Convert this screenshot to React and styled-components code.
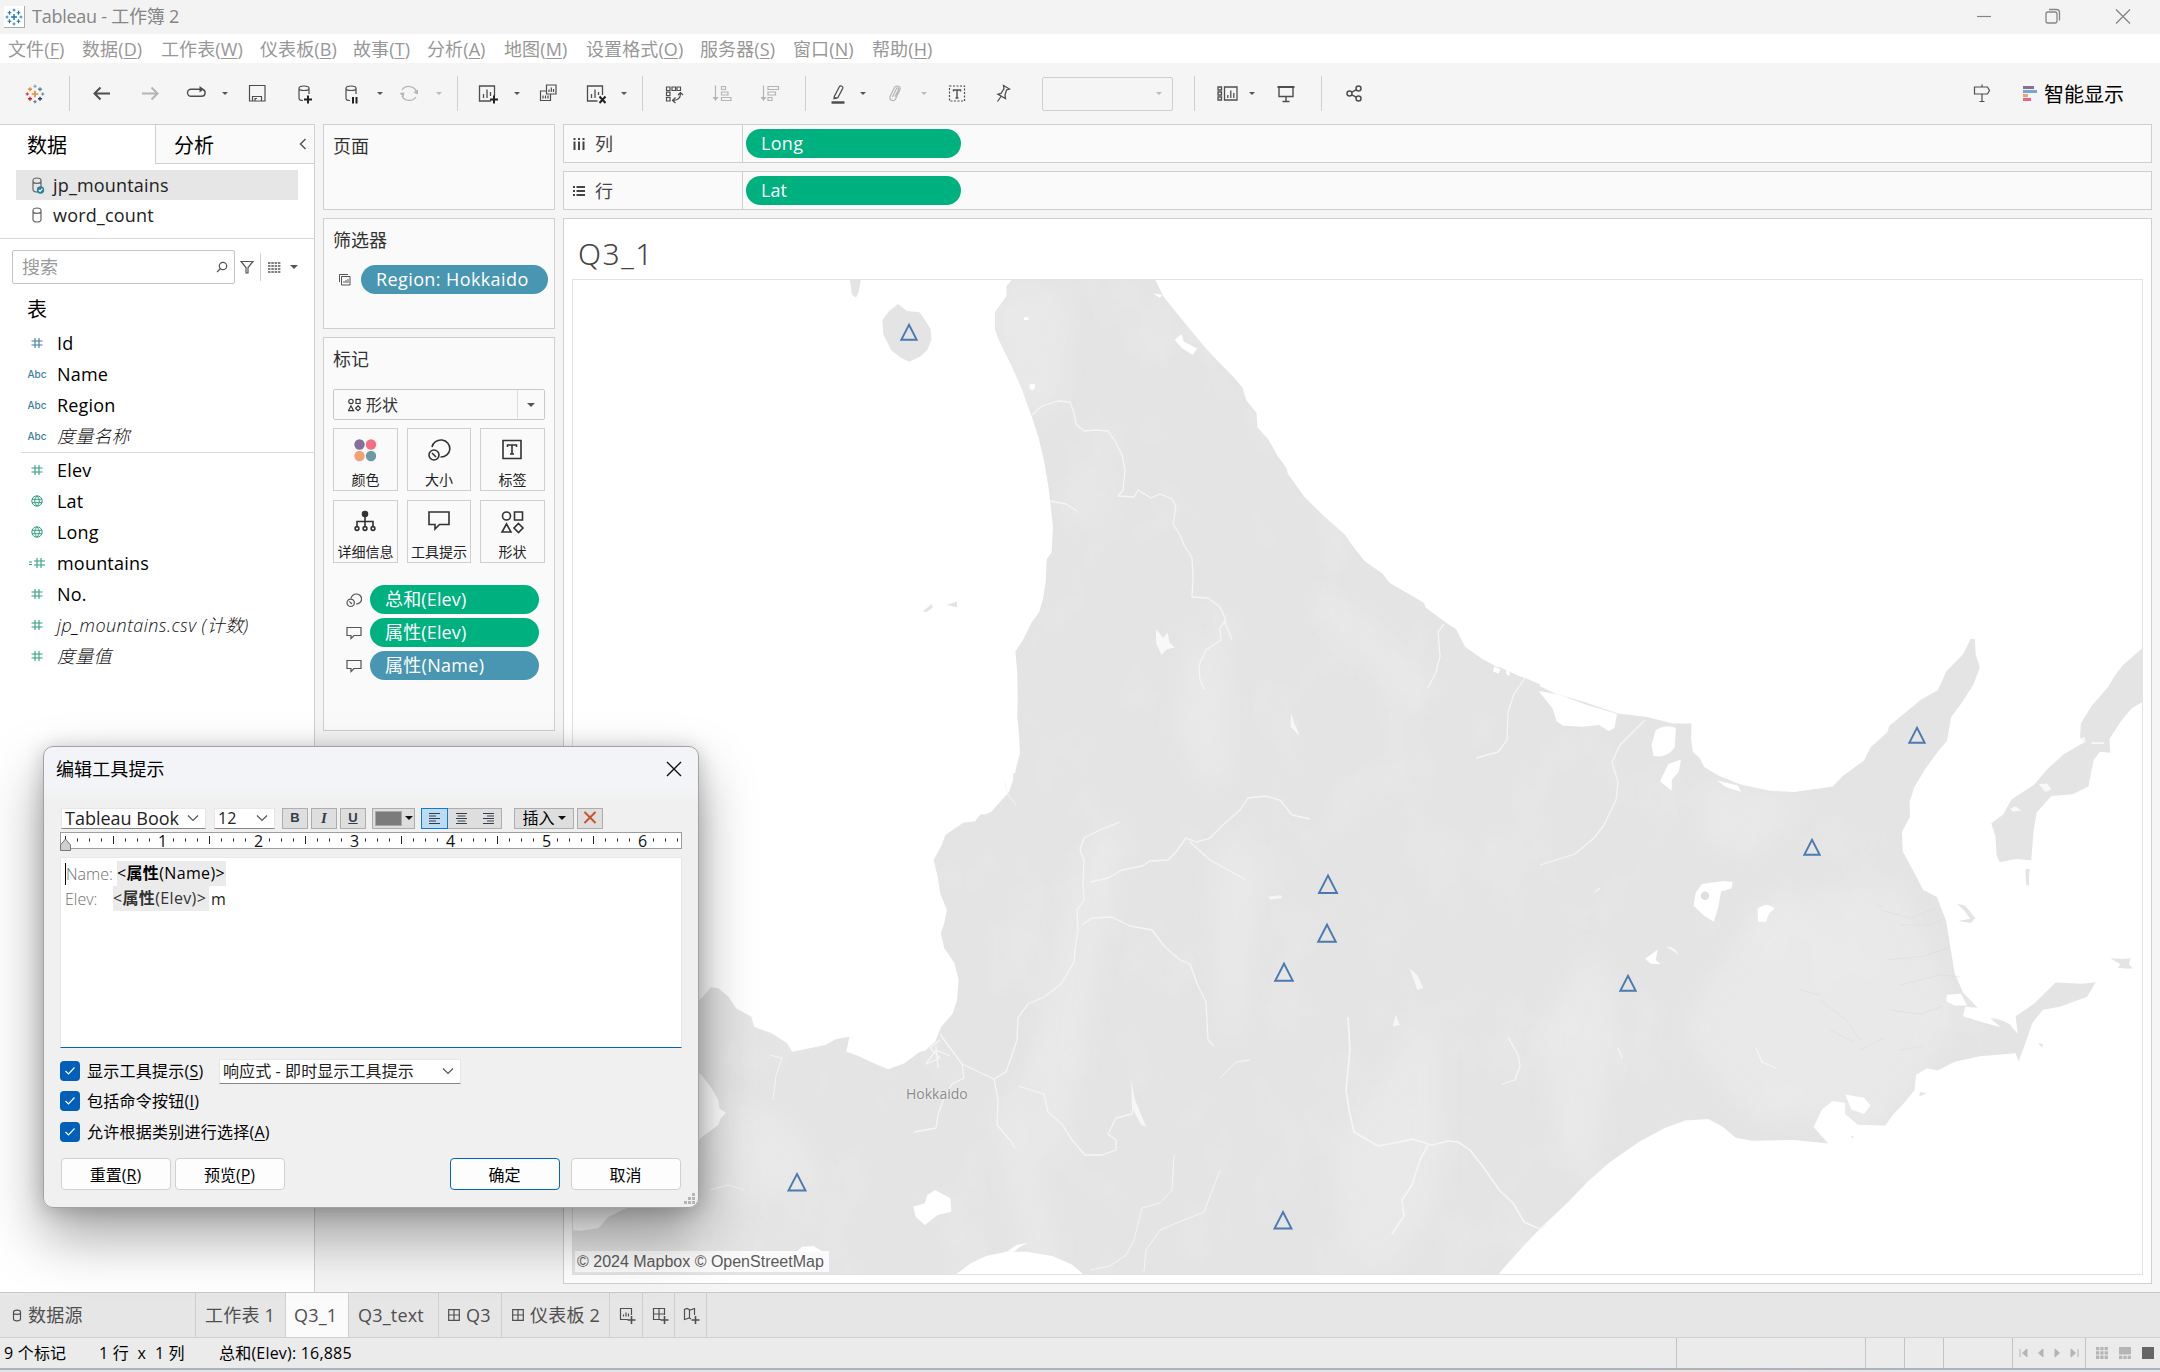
import React from "react";
import styled, { createGlobalStyle, css } from "styled-components";

const Global = createGlobalStyle`
  *, *::before, *::after { box-sizing: border-box; }
  html, body { margin: 0; padding: 0; background: #f5f5f5; }
  body { font-family: "Open Sans", "Noto Sans CJK SC", sans-serif; font-size: 18px; line-height: 1; color: #000; overflow: hidden; }
  svg { display: block; flex: none; }
  u { text-underline-offset: 2px; text-decoration-thickness: 1px; }
`;

const line = "#cfcfcf";

/* ---------- frame ---------- */
const Window = styled.div`
  position: relative;
  width: 2160px;
  height: 1372px;
  display: flex;
  flex-direction: column;
  overflow: hidden;
  background: #f5f5f5;
`;
const TitleBar = styled.header`
  height: 34px;
  flex: none;
  background: #f3f3f3;
  display: flex;
  align-items: center;
  padding: 0 27px 0 4px;
  color: #858585;
`;
const AppBadge = styled.span`
  width: 21px;
  height: 22px;
  background: #fff;
  border-right: 1px solid #aaa;
  border-bottom: 1px solid #aaa;
  display: grid;
  place-items: center;
`;
const WindowTitle = styled.span`
  margin-left: 7px;
  line-height: 22px;
  padding-bottom: 2px;
  white-space: nowrap;
  letter-spacing: -0.25px;
`;
const WindowControls = styled.div`
  margin-left: auto;
  display: flex;
  gap: 50px;
`;
const MenuBar = styled.nav`
  height: 29px;
  flex: none;
  background: #fff;
  display: flex;
  align-items: center;
  padding-left: 8px;
  gap: 17px;
  color: #979797;
`;
const MenuItem = styled.span`
  width: ${(p) => p.$w}px;
  line-height: 30px;
  padding-top: 1px;
  white-space: nowrap;
  letter-spacing: 0.1px;
`;
const Toolbar = styled.div`
  height: 61px;
  flex: none;
  display: flex;
  align-items: center;
  padding-right: 35px;
`;
const Tool = styled.span`
  width: 28px;
  height: 28px;
  margin-left: ${(p) => p.$ml}px;
  color: ${(p) => (p.$dim ? "#b4b4b4" : "#4e4e4e")};
  flex: none;
  display: grid;
  align-items: center;
`;
const Caret = styled.span`
  width: 8px;
  flex: none;
  display: flex;
  justify-content: center;
  margin-left: ${(p) => p.$ml || 0}px;
  &::before {
    content: "";
    border: solid transparent;
    border-width: ${(p) => p.$s || 3.5}px ${(p) => p.$s || 3}px 0;
    border-top-color: ${(p) => (p.$dim ? "#bbb" : p.$black ? "#111" : "#555")};
  }
`;
const ToolDivider = styled.span`
  width: 1px;
  height: 35px;
  background: ${line};
  margin-left: ${(p) => p.$ml}px;
  flex: none;
`;
const FitBox = styled.span`
  width: 131px;
  height: 34px;
  border: 1px solid ${line};
  border-radius: 2px;
  margin-left: 25px;
  display: flex;
  align-items: center;
  justify-content: flex-end;
  padding-right: 9px;
`;
const ShowMe = styled.span`
  margin-left: 26px;
  display: flex;
  align-items: center;
  gap: 6px;
  font-size: 20px;
  line-height: 28px;
  padding-top: 2px;
`;

const Body = styled.main`
  height: 1168px;
  flex: none;
  display: flex;
`;

/* ---------- data pane ---------- */
const DataPane = styled.aside`
  width: 315px;
  flex: none;
  background: #fff;
  border-top: 1px solid ${line};
  border-right: 1px solid ${line};
`;
const PaneTabs = styled.div`
  display: flex;
  height: 39px;
  font-size: 20px;
`;
const PaneTab = styled.div`
  display: flex;
  align-items: center;
  width: ${(p) => (p.$active ? 155 : 159)}px;
  padding-top: 3px;
  padding-left: ${(p) => (p.$active ? 27 : 18)}px;
  line-height: 30px;
  ${(p) =>
    !p.$active &&
    css`
      background: #fafafa;
      border-left: 1px solid ${line};
      border-bottom: 1px solid ${line};
      padding-right: 7px;
      justify-content: space-between;
    `}
`;
const Sources = styled.div`
  padding: 6px 16px 7px;
  border-bottom: 1px solid #d9d9d9;
  height: 75px;
`;
const Source = styled.div`
  height: 30px;
  display: flex;
  align-items: center;
  padding-left: 15px;
  padding-bottom: 1px;
  gap: 8px;
  line-height: 28px;
  color: #222;
  letter-spacing: 0.18px;
  background: ${(p) => (p.$active ? "#e6e6e6" : "transparent")};
`;
const SearchRow = styled.div`
  display: flex;
  align-items: center;
  height: 34px;
  margin: 11px 0 0 12px;
`;
const SearchBox = styled.div`
  width: 223px;
  height: 34px;
  border: 1px solid #c4c4c4;
  border-radius: 2px;
  display: flex;
  align-items: center;
  justify-content: space-between;
  padding: 0 6px 0 9px;
  color: #9a9a9a;
  line-height: 28px;
`;
const SearchDivider = styled.span`
  width: 1px;
  height: 28px;
  background: ${line};
  margin: 0 7px 0 1px;
`;
const TablesHead = styled.div`
  font-size: 20px;
  line-height: 30px;
  padding: 11px 0 0 27px;
  height: 43px;
`;
const FieldGroup = styled.div`
  margin-left: 21px;
  padding-top: ${(p) => (p.$last ? 1 : 0)}px;
  padding-bottom: ${(p) => (p.$last ? 0 : 1)}px;
  border-bottom: ${(p) => (p.$last ? 0 : 1)}px solid #d9d9d9;
`;
const Field = styled.div`
  height: 31.1px;
  display: flex;
  align-items: center;
  line-height: 28px;
  letter-spacing: 0.2px;
  white-space: nowrap;
  ${(p) =>
    p.$it &&
    css`
      font-style: italic;
      color: #111;
      font-weight: 300;
      letter-spacing: ${p.$ls}px;
    `}
`;
const FieldIcon = styled.span`
  width: 32px;
  margin-right: 4px;
  display: flex;
  justify-content: center;
  color: ${(p) => (p.$dim ? "#3c7f9e" : "#2fa27b")};
  font: 500 10px/12px Inter, sans-serif;
  letter-spacing: 0;
`;

/* ---------- cards ---------- */
const Cards = styled.section`
  width: 248px;
  flex: none;
  padding: 0 0 0 8px;
  display: flex;
  flex-direction: column;
  gap: 8px;
`;
const Card = styled.div`
  width: 232px;
  height: ${(p) => p.$h}px;
  background: #fafafa;
  border: 1px solid ${line};
  padding: 8px 9px 0;
  color: #333;
`;
const CardTitle = styled.div`
  line-height: 27px;
  height: 28px;
`;
const PillRow = styled.div`
  display: flex;
  align-items: center;
  height: 29px;
  margin-top: ${(p) => p.$mt || 4}px;
  padding-left: ${(p) => p.$pl}px;
  gap: ${(p) => p.$gap}px;
  color: #555;
`;
const Pill = styled.span`
  width: ${(p) => p.$w}px;
  flex: none;
  height: 29px;
  border-radius: 15px;
  background: ${(p) => (p.$blue ? "#4996b2" : "#00b180")};
  color: #fff;
  padding-left: 15px;
  line-height: 28px;
  white-space: nowrap;
  letter-spacing: ${(p) => p.$ls || 0}px;
`;
const MarkSelect = styled.div`
  height: 31px;
  width: 212px;
  margin-top: 15px;
  border: 1px solid #c8c8c8;
  border-radius: 2px;
  display: flex;
  align-items: center;
  font-size: 16px;
  line-height: 28px;
  padding-left: 14px;
  gap: 5px;
`;
const MarkSelectArrow = styled.span`
  margin-left: auto;
  height: 29px;
  width: 27px;
  border-left: 1px solid #dedede;
  display: grid;
  place-items: center;
`;
const MarkGrid = styled.div`
  display: grid;
  grid-template-columns: 65px 64px 65px;
  gap: 9px;
  margin: 8px 0 22px;
`;
const MarkButton = styled.div`
  height: 63px;
  border: 1px solid ${line};
  display: flex;
  flex-direction: column;
  align-items: center;
  padding-top: 7px;
  font-size: 14px;
  line-height: 21px;
  gap: 5px;
  color: #222;
  white-space: nowrap;
`;

/* ---------- view ---------- */
const View = styled.section`
  width: 1589px;
  flex: none;
`;
const Shelf = styled.div`
  height: 39px;
  margin-bottom: 8px;
  background: #fafafa;
  border: 1px solid ${line};
  display: flex;
  align-items: center;
`;
const ShelfLabel = styled.div`
  width: 179px;
  height: 37px;
  border-right: 1px solid ${line};
  margin-right: 3px;
  padding-left: 8px;
  display: flex;
  align-items: center;
  gap: 9px;
  color: #444;
  line-height: 28px;
`;
const Sheet = styled.div`
  height: 1066px;
  background: #fff;
  border: 1px solid ${line};
  padding: 14px 8px 0;
`;
const SheetTitle = styled.h1`
  margin: 0;
  padding-left: 6px;
  height: 46px;
  font: 300 30px/42px "Noto Sans", sans-serif;
  color: #444;
  letter-spacing: 1.5px;
`;
const MapFrame = styled.div`
  position: relative;
  width: 1571px;
  height: 996px;
  border: 1px solid #e2e2e2;
`;
const PlaceLabel = styled.span`
  position: absolute;
  left: 333px;
  top: 804px;
  font-size: 14px;
  line-height: 20px;
  color: #8a8a8a;
  text-shadow: 0 0 2px #fff;
`;
const Attribution = styled.span`
  position: absolute;
  left: 2px;
  bottom: 2px;
  height: 21px;
  width: 254px;
  padding-left: 2px;
  background: rgba(255, 255, 255, 0.8);
  font: 16px/21px "Liberation Sans", sans-serif;
  color: #5a5a5a;
  white-space: nowrap;
`;

/* ---------- bottom ---------- */
const SheetTabs = styled.div`
  height: 45px;
  flex: none;
  background: #e6e6e6;
  border-top: 1px solid #c8c8c8;
  display: flex;
  color: #4f4f4f;
`;
const SheetTab = styled.div`
  width: ${(p) => p.$w}px;
  padding-left: ${(p) => p.$pl}px;
  border-right: 1px solid ${line};
  background: ${(p) => (p.$active ? "#fbfbfb" : "transparent")};
  display: flex;
  align-items: center;
  gap: 6px;
  line-height: 44px;
  white-space: nowrap;
  letter-spacing: 0.2px;
`;
const StatusBar = styled.footer`
  height: 31px;
  flex: none;
  background: #ebebeb;
  border-top: 1px solid ${line};
  display: flex;
  font-size: 16px;
  line-height: 30px;
  padding-left: 4px;
  white-space: nowrap;
`;
const Status = styled.span`
  width: ${(p) => p.$w}px;
  flex: none;
  letter-spacing: 0.2px;
`;
const StatusCell = styled.div`
  width: ${(p) => p.$w}px;
  flex: none;
  border-left: 1px solid #c4c4c4;
  display: flex;
  align-items: center;
  justify-content: space-evenly;
`;
const ViewModes = styled(StatusCell)`
  justify-content: flex-start;
  padding-left: 10px;
  gap: 11px;
`;
const DesktopEdge = styled.div`
  height: 4px;
  border-top: 2px solid #abb4ba;
  background: linear-gradient(90deg, #dfe3ea 0 75%, #f1dede 78%, #dfe6f0 90%);
`;

/* ---------- dialog ---------- */
const Dialog = styled.div`
  position: absolute;
  left: 43px;
  top: 746px;
  width: 656px;
  height: 462px;
  border: 1px solid #a2a2a2;
  border-radius: 10px;
  background: linear-gradient(#f3f4f7 0 40px, #f0f0f0 54px);
  box-shadow: 0 28px 56px rgba(0, 0, 0, 0.36), 0 2px 20px rgba(0, 0, 0, 0.2);
  padding: 0 16px;
  font-size: 16px;
`;
const DialogTitle = styled.div`
  height: 60px;
  padding: 0 0 17px;
  margin-left: -4px;
  margin-right: -1px;
  font-size: 18px;
  line-height: 28px;
  letter-spacing: 0.1px;
  display: flex;
  align-items: center;
  justify-content: space-between;
`;
const FormatRow = styled.div`
  height: 22px;
  display: flex;
  align-items: center;
`;
const Combo = styled.span`
  width: ${(p) => p.$w}px;
  flex: none;
  height: ${(p) => p.$h}px;
  margin: 0 ${(p) => p.$mr || 0}px 0 ${(p) => p.$ml || 0}px;
  padding: 0 6px 0 3px;
  background: #fff;
  border: 1px solid #e6e6e6;
  border-bottom-color: #868686;
  display: flex;
  align-items: center;
  justify-content: space-between;
  font-size: ${(p) => p.$fs || 16}px;
  line-height: 20px;
  white-space: nowrap;
  color: #222;
`;
const FormatButton = styled.span`
  width: ${(p) => p.$w || 26}px;
  height: 21px;
  margin-left: ${(p) => (p.$ml === undefined ? 3 : p.$ml)}px;
  border: 1px solid ${(p) => (p.$on ? "#0f7ad1" : "#adadad")};
  ${(p) => p.$mid && "border-left-width: 0; border-right-width: 0;"}
  ${(p) => p.$end && "border-left-width: 0;"}
  background: ${(p) => (p.$on ? "#bcdcf4" : "#dedede")};
  display: flex;
  align-items: center;
  justify-content: center;
  gap: 3px;
  font-size: 16px;
  line-height: 20px;
`;
const Glyph = styled.span`
  font: 700 13px/18px "Liberation Sans", sans-serif;
  color: #333e4c;
  ${(p) => p.$italic && 'font-style: italic; font-family: "Liberation Serif", serif; font-size: 15px;'}
  ${(p) => p.$under && "text-decoration: underline;"}
`;
const Swatch = styled.span`
  width: 27px;
  height: 15px;
  background: #7b7b7b;
  border: 1px solid #a8a8a8;
`;
const RulerRow = styled.div`
  display: flex;
  width: 622px;
  height: 25px;
  margin-top: 3px;
`;
const Editor = styled.div`
  height: 191px;
  background: #fff;
  border: 1px solid #e6e6e6;
  border-top-color: #e9e9e9;
  border-bottom: 1px solid #0067b8;
  padding: 3px 0 0 4px;
  font-size: 16px;
  color: #222;
`;
const EditorLine = styled.div`
  height: 25px;
  display: flex;
  align-items: center;
  line-height: 24px;
  white-space: nowrap;
`;
const Cursor = styled.span`
  width: 1px;
  height: 22px;
  background: #000;
`;
const Faint = styled.span`
  color: #707070;
  font-weight: 300;
  width: ${(p) => p.$w}px;
`;
const Token = styled.span`
  background: #ebebeb;
  height: 25px;
  width: ${(p) => p.$w}px;
  color: ${(p) => (p.$dark ? "#000" : "#333")};
  letter-spacing: 0.35px;
  margin-right: 2px;
`;
const Options = styled.div`
  padding-top: 10px;
  letter-spacing: 0.1px;
`;
const OptionRow = styled.div`
  height: ${(p) => p.$h}px;
  display: flex;
  align-items: center;
  line-height: 24px;
  white-space: nowrap;
`;
const OptionLabel = styled.span`
  width: ${(p) => (p.$w ? p.$w + "px" : "auto")};
  letter-spacing: 0.25px;
`;
const CheckMark = styled.span`
  width: 20px;
  height: 20px;
  border-radius: 4px;
  background: #005fb8;
  margin-right: 7px;
  display: grid;
  place-items: center;
`;
const ButtonRow = styled.div`
  display: flex;
  margin-top: 12px;
`;
const DialogButton = styled.button`
  width: 110px;
  height: 32px;
  flex: none;
  margin: 0;
  padding: 1px 1px 0 0;
  margin-left: ${(p) => p.$ml}px;
  font: 16px/28px "Open Sans", "Noto Sans CJK SC", sans-serif;
  background: #fdfdfd;
  border: 1px solid ${(p) => (p.$primary ? "#0067c0" : "#d0d0d0")};
  border-radius: 4px;
  color: #000;
`;
const Grip = styled.span`
  position: absolute;
  right: 2px;
  bottom: 2px;
`;

/* ---------- icons ---------- */
const Svg = ({ s = 28, w = s, h = s, vb, sw = 1.5, children }) => (
  <svg width={w} height={h} viewBox={vb || `0 0 ${w} ${h}`} fill="none" stroke="currentColor" strokeWidth={sw}>
    {children}
  </svg>
);
const plus = (x, y, r) => `M${x - r} ${y}h${2 * r}M${x} ${y - r}v${2 * r}`;
const Logo = ({ size, mono }) => {
  const c = mono ? Array(9).fill("#1f77b4") : ["#eb8a2f", "#5b879b", "#5b879b", "#eb8a2f", "#c72037", "#c72037", "#1f447e", "#7199a6", "#59657f"];
  return (
    <svg width={size} height={size} viewBox="0 0 22 22" strokeWidth="1.5" fill="none">
      <path d={plus(11, 11, 3.6)} stroke={c[3]} strokeWidth="1.8" />
      <path d={plus(5.5, 5.8, 2.3)} stroke={c[0]} />
      <path d={plus(16.5, 5.8, 2.3)} stroke={c[2]} />
      <path d={plus(5.5, 16.2, 2.3)} stroke={c[4]} />
      <path d={plus(16.5, 16.2, 2.3)} stroke={c[6]} />
      <path d={plus(11, 2.5, 1.8)} stroke={c[7]} strokeWidth="1.1" />
      <path d={plus(11, 19.5, 1.8)} stroke={c[8]} strokeWidth="1.1" />
      <path d={plus(2.5, 11, 1.8)} stroke={c[5]} strokeWidth="1.1" />
      <path d={plus(19.5, 11, 1.8)} stroke={c[1]} strokeWidth="1.1" />
    </svg>
  );
};
const icons = {
  back: <Svg sw={2}><path d="M6.500 13.500H22M12.500 7.500l-6 6 6 6" /></Svg>,
  fwd: <Svg sw={2}><path d="M6 13.500h15.500M15.500 7.500l6 6-6 6" /></Svg>,
  redo: <Svg sw={1.4}><path d="M18 9.300H9a3.500 3.500 0 0 0 0 7h10.500c4.500 0 4.500-5.500 1.500-6.800" /><path d="M17.500 6l4.500 3.300-4.500 3.300z" fill="currentColor" stroke="none" /></Svg>,
  save: <Svg sw={1.2}><path d="M6.500 5.500H22V21H6.500zM9.500 21v-4.500h9V21M12 21v-2.500h2" /></Svg>,
  dbAdd: <Svg sw={1.2}><path d="M13 20.500c-2.500 0-4-.8-4-2.300V8.200C9 6.800 11 6 14 6s5 .8 5 2.200V14M9 8.200c0 1.500 2 2.300 5 2.300s5-.8 5-2.300" /><path d="M14 19.500h8M18 15.500v8" stroke="#222" strokeWidth="2" /></Svg>,
  dbPause: <Svg sw={1.2}><path d="M13 20.500c-2.500 0-4-.8-4-2.300V8.200C9 6.800 11 6 14 6s5 .8 5 2.200V14M9 8.200c0 1.500 2 2.300 5 2.300s5-.8 5-2.300" /><path d="M16 17v6.500M19.500 17v6.500" stroke="#222" strokeWidth="2" /></Svg>,
  refresh: <Svg sw={1.3}><path d="M7 10a8 7.500 0 0 1 14.500 2M21 17a8 7.500 0 0 1-14-1" /><path d="M18.500 12.500l4.500-3v5zM9.500 12.500L4.500 13l4 4z" fill="currentColor" stroke="none" /></Svg>,
  sheetAdd: <Svg sw={1.3}><path d="M17 21H5.500V6h15v10M9.500 18V14M13 18V9.500M16.500 16v-4" /><path d="M16 19.500h8M20 15.500v8" stroke="#222" strokeWidth="2" /></Svg>,
  duplicate: <Svg sw={1.2}><path d="M12.500 5h9.500v9H12.500zM15 12V9.500M17.300 12V7.500M19.500 12V9M12.500 11H6.500v9.500h10V14M9 18.500v-3M11.500 18.500v-3M14 18.500v-3" /></Svg>,
  sheetClear: <Svg sw={1.3}><path d="M15.500 21h-10V6h15v9M9.500 18V14M13 18V9.500M16.500 15v-3" /><path d="M17.500 16.500l6 6.500M23.500 16.500l-6 6.500" stroke="#222" strokeWidth="2" /></Svg>,
  swap: <Svg sw={1.2}><path d="M6.500 7h3.500v3.500h-3.500zM12 7h3.500v3.500H12zM17 7h3.500v3.500H17zM6.500 12.200h3.500v3.500h-3.500zM6.500 17.500h3.500V21h-3.500zM20.500 13.500c0 4-2 6.500-7 7M18 15l2.500-2.500 2.500 2.500M15.500 17.500l-3 3 3 2.500" /></Svg>,
  asc: <Svg sw={1.2}><path d="M6.500 5.500v14M12.500 6.500h4v3h-4zM12.500 12h6.500v3h-6.500zM12.500 17.500h9.500v3h-9.500z" /><path d="M3.500 17h6l-3 4z" fill="currentColor" stroke="none" /></Svg>,
  desc: <Svg sw={1.2}><path d="M6.500 5.500v14M11 6.500h10.500v3H11zM11 12h7.500v3H11zM11 17.500h4v3h-4z" /><path d="M3.500 17h6l-3 4z" fill="currentColor" stroke="none" /></Svg>,
  pen: <Svg sw={1.3}><path d="M10.500 16l5-9.500c1-1.300 4 0 3.300 1.700l-5 9.500-3.800 1zM10 17l3 1.500" /><path d="M7.500 22.500h13" strokeWidth="2.500" /></Svg>,
  clip: <Svg sw={1.2}><path d="M9 16.500l4.500-9c1.500-2.500 6.500-1.500 5.500 2l-4.500 9.500c-1.600 3-6.500 1.500-5.500-2zM11.500 17l4-8.500c1-1.300 2.500-.3 2 1.300l-3.500 7" /></Svg>,
  text: <Svg sw={1.2}><path d="M6.500 6h15v15h-15z" strokeDasharray="2 1.500" /><path d="M10.500 11.500V10h7v1.500M14 10v8M12.500 18h3" strokeWidth="1.400" /></Svg>,
  pin: <Svg sw={1.3}><path d="M14.500 5.500l6 3.500-3 1-1.500 5 .5 3.500-7.500-4.300 3-.7 3-5zM12 16.500l-3.500 5" /></Svg>,
  cards: <Svg sw={1.3}><path d="M5 7h3.500v3H5zM5 12h3.500v3H5zM5 17h3.500v3H5zM11.500 7H24v13H11.500zM14.800 18v-3M17.800 18v-7.500M20.800 18v-5" /></Svg>,
  present: <Svg sw={1.4}><path d="M5.500 7h17" strokeWidth="2" /><path d="M7 7v9.500h14V7M14 16.500v5M10.500 21.500h7" /></Svg>,
  share: <Svg sw={1.5}><circle cx="9.500" cy="13.500" r="2.500" /><circle cx="18.500" cy="8.500" r="2.500" /><circle cx="18.500" cy="18.500" r="2.500" /><path d="M11.900 12.200l4.200-2.300M11.900 14.800l4.200 2.400" /></Svg>,
  sign: <Svg sw={1.2}><path d="M14 4.500v3M6.500 7h13l2 3.500-2 3.500H6.500zM14 14v7.500M11.500 21.500h5" /></Svg>,
  hash: <Svg s={12} sw={1.1}><path d="M4 1v10M8 1v10M.500 4h11M.500 8h11" /></Svg>,
  eqHash: <Svg w={16} h={12} sw={1.1}><path d="M8 1v10M12 1v10M5 4h11M5 8h11M0 5h3M0 7.500h3" /></Svg>,
  globe: <Svg s={12} sw={1}><circle cx="6" cy="6" r="5.200" /><path d="M1 4.300h10M1 7.700h10M6 1c-3 3-3 7 0 10M6 1c3 3 3 7 0 10" /></Svg>,
  bubble: <Svg w={16} h={14} sw={1.2}><path d="M1 1.500h14v8H8l-3 3v-3H1z" /></Svg>,
  size: <Svg w={16} h={16} sw={1.2}><path d="M5 6.500a5.300 5 0 1 1 5 5.500" /><circle cx="4.700" cy="10.800" r="3.700" /><path d="M3.300 9.300l2.700 2.700" /></Svg>,
  shapes: <Svg w={13} h={14} vb="0 0 22 22" sw={1.9}><circle cx="5" cy="5" r="3.700" /><path d="M13.500 1.500h7v7h-7zM5 12.500l4.500 8H.8zM17 12.300l4.200 4.200-4.200 4.200-4.200-4.200z" /></Svg>,
  linked: <Svg w={12} h={12} sw={1}><path d="M.5 8V.5H9M2.500 2.500h8.500v8.500H2.500zM5 9V7M7 9V6M9 9V5" /></Svg>,
};
const SourceIcon = ({ checked }) => (
  <svg width="14" height="18" viewBox="0 0 14 18" fill="none" stroke="#666" strokeWidth="1.200">
    <path d="M2 4.500c0-1.500 1.500-2.500 4-2.500s4 1 4 2.500v9c0 1.500-1.500 2.500-4 2.500s-4-1-4-2.500zM2 5c0 1.500 1.500 2.300 4 2.300s4-.8 4-2.300" />
    {checked && (
      <>
        <circle cx="9.500" cy="14" r="3.700" fill="#2a7f9e" stroke="none" />
        <path d="M7.800 14l1.300 1.300 2.300-2.600" stroke="#fff" />
      </>
    )}
  </svg>
);
const Chevron = () => (
  <Svg w={12} h={8} sw={1.2}><path d="M1 1.500l5 5 5-5" stroke="#555" /></Svg>
);
const MarkIcon = ({ kind }) => (
  <svg width="26" height="28" viewBox="0 0 26 28" fill="none" stroke="#333" strokeWidth="1.600">
    {kind === "color" && (
      <g stroke="none">
        <circle cx="6.500" cy="8.500" r="5.200" fill="#86709a" />
        <circle cx="18" cy="8.500" r="5.200" fill="#f56f80" />
        <circle cx="6.500" cy="20" r="5.200" fill="#f2a172" />
        <circle cx="18" cy="20" r="5.200" fill="#6b9aa6" />
      </g>
    )}
    {kind === "size" && (
      <>
        <path d="M6 11a9 8.500 0 1 1 8.500 10" />
        <circle cx="8" cy="19" r="5" />
        <path d="M6 17l4 4" />
      </>
    )}
    {kind === "label" && <path d="M3 4.500h18v18H3zM7.500 11V9h9v2M12 9v9M10 18h4" />}
    {kind === "detail" && (
      <>
        <circle cx="12" cy="6" r="2.500" fill="#333" />
        <path d="M12 8v10M4 18v-4.500h16V18" />
        <circle cx="4" cy="20.500" r="1.900" /><circle cx="12" cy="20.500" r="1.900" /><circle cx="20" cy="20.500" r="1.900" />
      </>
    )}
    {kind === "tooltip" && <path d="M3 4h20v12.500H13.500l-4.500 4.500v-4.500H3z" />}
    {kind === "shape" && (
      <>
        <circle cx="6.500" cy="8" r="4" />
        <path d="M14.500 4h8v8h-8zM6.500 16l4.500 8H2zM18.500 15.500l4.500 4.500-4.500 4.500-4.500-4.500z" />
      </>
    )}
  </svg>
);
const AlignIcon = ({ a }) => {
  const xs = a === "l" ? [0, 0, 0, 0, 0] : a === "c" ? [0, 1.5, 0, 1.5, 0] : [0, 4, 0, 4, 0];
  return (
    <Svg w={11} h={13} sw={1.1}>
      <path d={xs.map((x, i) => `M${x} ${1.5 + i * 2.5}h${i % 2 ? (a === "c" ? 8 : 7) : 11}`).join("")} stroke="#333e4c" />
    </Svg>
  );
};

/* ---------- map ---------- */
const northLand =
  "M385 27L373 45 373 73 347 118 347 165 352 185 365 220 385 270 408 335 428 405 445 470 457 535 466 600 472 660 477 720 474 790 463 810 461 870 455 920 446 958 430 985 410 1035 393 1068 397 1130 398 1200 397 1250 401 1300 403 1355 395 1390 389 1435 375 1475 350 1515 330 1525 315 1524 300 1548 270 1558 240 1580L1568 1580 1568 1160 1530 1140 1500 1132 1470 1110 1440 1090 1400 1055 1380 1005 1360 990 1312 945 1308 932 1230 875 1215 850 1175 815 1150 775 1130 740 1085 690 1040 635 1003 570 1000 555 980 520 960 475 935 440 933 400 910 365 902 330 882 300 850 260 820 220 770 145 725 75 706 27Z";
const westLand =
  "M653 0L645 35 610 95 600 102 585 110 580 124 555 128 520 165 513 195 497 240 505 290 510 340 523 390 518 430 511 460 518 505 538 550 546 600 543 660 535 700 512 740 500 785 480 812 470 815 440 850 408 868 380 850 350 828 326 815 332 770 305 778 285 795 220 815 210 790 180 760 145 740 140 710 110 685 95 650 75 625 60 622 45 650 20 680 20 860 42 885 60 920 75 960 77 985 90 998 80 1015 75 1035 40 1075 0 1140 -60 1260 -105 1285 -140 1310 -160 1345 -195 1352 -215 1350 -230 1500 535 1490 570 1450 600 1428 640 1415 680 1415 730 1428 770 1455 795 1490 1585 1500 1585 -20 653 -20Z";
const eastLand =
  "M-240 155L0 155 55 180 130 215 200 235 280 262 350 270 410 285 455 285 454 320 458 350 475 365 485 385 520 405 570 425 640 440 700 443 790 430 815 405 865 370 880 340 920 305 925 290 1000 230 1040 208 1060 165 1100 125 1118 90 1128 90 1130 125 1140 155 1125 195 1095 240 1072 270 1062 325 1040 350 1010 390 985 430 973 465 974 500 955 535 957 580 985 630 1005 668 1038 685 1060 740 1070 800 1080 860 1100 905 1135 940 1105 938 1100 960 1150 975 1190 985 1165 965 1210 978 1230 1000 1225 960 1270 930 1320 882 1380 885 1415 882 1395 915 1330 938 1290 945 1265 975 1245 1030 1232 1065 1225 1045 1140 1052 1080 1065 1040 1085 1015 1080 988 1095 985 1130 960 1160 935 1185 915 1212 850 1210 820 1185 820 1160 790 1155 765 1175 745 1215 780 1253 700 1245 600 1247 560 1240 530 1215 495 1197 440 1200 390 1218 330 1250 260 1297 210 1340 160 1390 100 1445 60 1485 0 1550 -20 1580 -240 1580Z";
const kunashiri =
  "M1530 108L1480 150 1460 175 1445 200 1405 245 1380 285 1378 318 1385 330 1340 355 1300 390 1270 425 1215 460 1195 495 1167 515 1177 545 1180 590 1187 605 1225 597 1262 600 1268 530 1275 490 1310 452 1360 448 1398 430 1410 370 1425 350 1450 352 1448 320 1475 280 1500 250 1530 233Z";
const peaks = [
  [909, 332, 8.7], [1917, 735, 8.7], [1812, 847, 8.7], [1628, 983, 8.7],
  [1328, 884, 10], [1327, 933, 9.8], [1284, 972, 9.8], [797, 1182, 9.5], [1283, 1220, 9.5],
];
const HokkaidoMap = () => (
  <svg width="1569" height="994" viewBox="573 280 1569 994">
    <defs>
      <filter id="haze" x="-40%" y="-40%" width="180%" height="180%">
        <feGaussianBlur stdDeviation="13" />
      </filter>
      <filter id="terrain" x="0" y="0" width="100%" height="100%">
        <feTurbulence type="fractalNoise" baseFrequency="0.016 0.011" numOctaves="5" seed="11" />
        <feColorMatrix values="0 0 0 0 1  0 0 0 0 1  0 0 0 0 1  0 3 0 0 -1.45" />
      </filter>
      <clipPath id="land">
        <path d={northLand} transform="translate(840 270) scale(.44643 .35714)" />
        <path d={westLand} transform="translate(680 780) scale(.5102 .33333)" />
        <path d={eastLand} transform="translate(1500 600) scale(.42092 .43367)" />
      </clipPath>
    </defs>
    <g fill="#e4e4e4">
      <g transform="translate(840 270) scale(.44643 .35714)">
        <path d={northLand} />
        <path d="M130 95L150 115 178 118 190 140 203 165 205 195 195 225 180 242 155 257 135 245 115 225 97 180 95 140 110 115ZM22 27L47 27 42 60 36 77 27 70ZM185 957L205 935 208 945 195 957ZM238 938L262 928 262 944Z" />
      </g>
      <path d={westLand} transform="translate(680 780) scale(.5102 .33333)" />
      <g transform="translate(1500 600) scale(.42092 .43367)">
        <path d={eastLand} />
        <path d={kunashiri} />
        <path d="M1248 620l10 0-2 40-6-4zM1085 700l20 5 24 28-10 12-30-5 28-5-15-20zM1450 826l30 2 18-2-4 14 10 10-20 0-16-2 6-8zM1278 1022l12 2-2 8zM998 1135l16 2-18 8zM1165 962l30 8 22 12-20-2zM835 1234l6 4-6 4z" />
      </g>
    </g>
    <g clipPath="url(#land)">
      <rect x="573" y="280" width="1569" height="994" filter="url(#terrain)" opacity="0.120" />
      <g fill="#eeeeee" filter="url(#haze)" opacity="0.500">
        <path d="M1010 290l60 0 0 60-20 70-40-20-15-60z" />
        <path d="M1190 620l40 50 0 110-25 10-30-60z" />
        <path d="M1070 880l40-60 20 0-30 130-20 120-20 90-30-10 10-120z" />
        <path d="M1210 860l40-40 10 80-20 140-20 0z" />
        <path d="M1330 1150l90-130 20 0 0 180-50 70-40 0z" />
        <path d="M1760 900l140-20 60 140-80 110-140-20-60-80z" />
        <path d="M1540 1030l50-90 30 60-30 190-30-40z" />
        <path d="M1300 590l60 20 80 80-30 20z" />
        <path d="M1700 780l110 20-60 60-50-20z" />
        <path d="M990 1110l30-20 40 170-30 10z" />
        <path d="M720 1090l70 30 40 70-100 10z" />
      </g>
    </g>
    <g fill="#fff">
      <g transform="translate(1500 600) scale(.42092 .43367)">
        <path d="M92 210L140 218 200 240 278 263 272 295 258 302 235 288 195 292 150 290 135 280 125 250ZM370 300Q395 285 418 295L415 340Q395 366 365 360L360 335ZM400 378L430 368 425 395 408 415 408 440 395 430 380 418ZM480 655L530 648 553 650 550 665 525 672 518 710 508 742 485 728 460 705 465 675ZM612 712Q635 695 652 712L640 722 632 742 613 742ZM345 827L375 806 370 830 382 840 358 838ZM820 1140L865 1148 880 1165 865 1185 835 1175ZM1062 910L1095 908 1110 935 1080 935 1060 925ZM515 416l50 12 8 14-35-10z" />
        <path d="M1280 425l20-2 10 14-14 6zM1212 480l14-4 12 10-20 2zM1374 320l14-4 4 10-10 6zM1405 328h30v4h-30zM395 800q22-2 30 22-10-14-30-22z" opacity=".75" />
        <circle cx="487" cy="682" r="10" fill="#dfdfdf" />
      </g>
      <g transform="translate(680 780) scale(.5102 .33333)">
        <path d="M500 1230L530 1255 532 1295 505 1305 480 1335 462 1310 457 1280 480 1270 485 1245ZM228 1415L240 1400 262 1398 280 1415ZM640 1415L660 1395 682 1388 665 1402 655 1415Z" />
        <path d="M1153 350l25-4 2 8-22 5zM1430 565l15 20 12 40-12 4zM1403 705l8 30-14 4zM884 900l8 60 22 80-10-6-18-50z" opacity=".65" />
      </g>
      <g transform="translate(840 270) scale(.44643 .35714)">
        <path d="M708 1005l16 25 10-15 4 28 12 14-18 5-12 15-12-32z" opacity=".75" />
        <path d="M750 195l15-15 5 20 30 20-10 18-25-20zM700 65l22 5-5 8zM425 320l12 0-2 16-10-2zM412 132h10v8h-10zM1465 1110l15 8-5 12-12-6zM1492 1120l8 5 0 12-8-6z" />
        <path d="M1010 1240l8 30 12 35-20-25z" opacity=".7" />
      </g>
    </g>
    <g fill="none" stroke="#f5f5f5" strokeWidth="1.300" strokeLinejoin="round">
      <path d="M1032 415L1042 406 1058 401 1070 402 1074 413 1076 424 1084 431 1096 430 1108 431 1115 441 1122 455 1125 470 1123 490 1118 496 1134 497 1138 490 1151 498 1160 494 1172 499 1176 506 1173 524 1180 535 1184 545 1192 558 1193 578 1192 597 1208 598 1220 607 1226 620 1220 628 1221 640 1206 650 1199 665 1200 680 1204 689M1224 620L1232 640" />
      <path d="M1050 501L1066 504 1077 511M1444 624L1438 632 1440 656 1436 672 1428 688M1525 678L1514 694 1508 712 1507 740 1498 752 1476 758" />
      <path d="M1310 819L1292 815 1280 800 1266 796 1248 798 1240 810 1224 824 1210 838 1196 842 1186 838 1176 852 1168 860 1150 861 1142 866 1122 870 1108 878 1090 882M1190 842L1210 860 1230 871 1246 880M1120 822L1100 830 1084 838 1080 850 1084 860 1083 880 1084 900 1077 910 1078 930 1075 950 1074 962 1066 976 1060 985 1044 997 1028 1004 1018 1018 1017 1040 1012 1055 1006 1072 994 1079 962 1064 948 1045 940 1034M1082 925L1092 918 1112 917 1130 926 1152 930 1164 946 1180 960 1190 964 1198 986 1206 1002 1208 1040 1214 1046" />
      <path d="M962 1064L964 1078 952 1084M994 1079L998 1100 997 1125 1010 1140 1015 1148M1018 1086L1044 1094 1048 1112 1062 1124 1072 1140 1085 1155 1102 1155 1116 1150 1116 1140 1108 1134 1116 1118 1132 1114 1134 1100M952 1084L944 1098 938 1115 936 1128 914 1132" />
      <path d="M1348 1017L1350 1050 1346 1090 1349 1110 1354 1132 1378 1146 1400 1142 1412 1139 1432 1145 1448 1141 1458 1142 1470 1150 1484 1168 1500 1191 1513 1203 1524 1222 1540 1229M1428 1145L1420 1160 1412 1185 1402 1200 1404 1216 1392 1234M1540 1229L1546 1224" strokeWidth="1.700" />
      <path d="M1174 1155L1172 1190 1160 1203 1142 1208 1134 1240 1126 1255 1110 1266 1090 1270M1220 1170L1204 1212 1184 1220 1160 1230 1146 1250 1144 1272M1005 782L1008 795 1016 805M1220 1078L1236 1062 1250 1060M770 1055L782 1058 776 1075 773 1100M710 1190L728 1185 745 1190" strokeWidth="1" />
      <path d="M1645 720L1632 733 1620 745 1612 762 1618 782 1616 800 1604 825 1594 838 1575 854 1540 865M1508 1037L1518 1055 1520 1066 1515 1080 1502 1084M1756 1048L1762 1062 1776 1068M1600 888L1595 892M1618 1048L1622 1058" />
      <path d="M940 1040L930 1048 940 1058 926 1064 936 1050 950 1056M936 1046L938 1068" />
    </g>
    <g fill="none" stroke="#d8dbdb" strokeWidth=".8" opacity=".7">
      <path d="M1880 910l30 8 26-10M1900 925l30 0 14-6M1888 960l36-4 24-8M1900 985l40-10 20 2M1876 905l8 2M1890 1010l30 4 24-8M1860 1050l24-12M1820 1000l26 20 14 20M1800 990l20 5M1830 1030l24 12M1900 1050l24-4" />
    </g>
    <g fill="none" stroke="#4a7ab0" strokeWidth="1.900">
      {peaks.map(([x, y, r]) => (
        <path key={`${x}-${y}`} d={`M${x} ${y - r + 1.5}L${x + r - 1} ${y + r - 1}H${x - r + 1}Z`} />
      ))}
    </g>
  </svg>
);

/* ---------- ruler ---------- */
const RulerSvg = styled.svg`
  overflow: visible;
`;
const Ruler = () => (
  <RulerSvg width="622" height="25" viewBox="0 0 622 25">
    <rect x=".5" y=".5" width="621" height="16" fill="#fff" stroke="#9d9d9d" />
    {Array.from({ length: 52 }, (_, i) => i).map((i) =>
      i % 8 === 0 && i ? (
        <text key={i} x={6.5 + i * 12} y="14.500" textAnchor="middle" fontSize="16" fontFamily="Open Sans" fill="#111">{i / 8}</text>
      ) : (
        <path key={i} d={i % 4 === 0 ? `M${5.5 + i * 12} 4v8` : `M${5.5 + i * 12} 6.500v3`} stroke="#222" strokeWidth="1" />
      )
    )}
    <path d="M.5 18.500v-5.500l5-6 5 6v5.500z" fill="#cfcfcf" stroke="#777" />
  </RulerSvg>
);

const menus = [
  ["文件", "F", 57], ["数据", "D", 62], ["工作表", "W", 82], ["仪表板", "B", 76], ["故事", "T", 57], ["分析", "A", 60],
  ["地图", "M", 65], ["设置格式", "O", 97], ["服务器", "S", 76], ["窗口", "N", 62], ["帮助", "H", 62],
];
const Key = ({ k }) => <>(<u>{k}</u>)</>;
const Check = () => (
  <CheckMark>
    <Svg s={12} sw={1.2}><path d="M1.500 6l3 3 6-6.500" stroke="#fff" /></Svg>
  </CheckMark>
);
const GridMark = () => (
  <Svg s={12} sw={1.2}><path d="M.7.7h10.600v10.600H.7zM.7 6h10.600M6 .7v10.600" /></Svg>
);

export default function App() {
  return (
    <Window>
      <Global />
      <TitleBar>
        <AppBadge><Logo size={18} mono /></AppBadge>
        <WindowTitle>Tableau - 工作簿 2</WindowTitle>
        <WindowControls>
          <Svg s={20} sw={1.2}><path d="M4 9.500h14" /></Svg>
          <Svg s={20} sw={1.3}><rect x="3" y="5" width="11" height="11" rx="2" /><path d="M6 2.500h7.500a3 3 0 0 1 3 3v8" /></Svg>
          <Svg s={20} sw={1.3}><path d="M3 2.500l14 14M17 2.500L3 16.500" /></Svg>
        </WindowControls>
      </TitleBar>
      <MenuBar>
        {menus.map(([t, k, w]) => (
          <MenuItem key={t} $w={w}>{t}<Key k={k} /></MenuItem>
        ))}
      </MenuBar>
      <Toolbar>
        <Tool $ml={25}><Logo size={20} /></Tool>
        <ToolDivider $ml={16} />
        <Tool $ml={18}>{icons.back}</Tool>
        <Tool $ml={20} $dim>{icons.fwd}</Tool>
        <Tool $ml={18}>{icons.redo}</Tool>
        <Caret $ml={11} />
        <Tool $ml={14}>{icons.save}</Tool>
        <Tool $ml={19}>{icons.dbAdd}</Tool>
        <Tool $ml={19}>{icons.dbPause}</Tool>
        <Caret $ml={11} />
        <Tool $ml={11} $dim>{icons.refresh}</Tool>
        <Caret $ml={12} $dim />
        <ToolDivider $ml={14} />
        <Tool $ml={16}>{icons.sheetAdd}</Tool>
        <Caret $ml={11} />
        <Tool $ml={13}>{icons.duplicate}</Tool>
        <Tool $ml={20}>{icons.sheetClear}</Tool>
        <Caret $ml={10} />
        <ToolDivider $ml={14} />
        <Tool $ml={17}>{icons.swap}</Tool>
        <Tool $ml={21} $dim>{icons.asc}</Tool>
        <Tool $ml={20} $dim>{icons.desc}</Tool>
        <ToolDivider $ml={20} />
        <Tool $ml={18}>{icons.pen}</Tool>
        <Caret $ml={7} />
        <Tool $ml={14} $dim>{icons.clip}</Tool>
        <Caret $ml={11} $dim />
        <Tool $ml={15}>{icons.text}</Tool>
        <Tool $ml={18}>{icons.pin}</Tool>
        <FitBox><Caret $dim /></FitBox>
        <ToolDivider $ml={21} />
        <Tool $ml={18}>{icons.cards}</Tool>
        <Caret $ml={7} />
        <Tool $ml={16}>{icons.present}</Tool>
        <ToolDivider $ml={21} />
        <Tool $ml={18}>{icons.share}</Tool>
        <Tool $ml={600}>{icons.sign}</Tool>
        <ShowMe>
          <svg width="16" height="18" viewBox="0 0 16 18">
            <path d="M1 0h11v3H1z" fill="#86709a" /><path d="M1 4h14v3H1z" fill="#7aa3d6" />
            <path d="M1 8h5v3H1z" fill="#f2a172" /><path d="M1 12h8v3H1z" fill="#f0627a" />
          </svg>
          智能显示
        </ShowMe>
      </Toolbar>

      <Body>
        <DataPane>
          <PaneTabs>
            <PaneTab $active>数据</PaneTab>
            <PaneTab>分析<Svg w={8} h={16}><path d="M6.500 1l-5 5 5 5" stroke="#555" /></Svg></PaneTab>
          </PaneTabs>
          <Sources>
            <Source $active><SourceIcon checked />jp_mountains</Source>
            <Source><SourceIcon />word_count</Source>
          </Sources>
          <SearchRow>
            <SearchBox>
              搜索
              <Svg s={12} sw={1.2}><circle cx="7" cy="5" r="3.700" stroke="#555" /><path d="M4.500 7.500L1 11" stroke="#555" /></Svg>
            </SearchBox>
            <Svg w={24} h={16} sw={1.2}><path d="M6 2.500h12l-5 6v5.500h-2V8.500z" stroke="#555" /></Svg>
            <SearchDivider />
            <Svg w={13} h={12} sw={1.3}><path d="M0 2h12.500M0 5h12.500M0 8h12.500M0 11h12.500" stroke="#555" strokeDasharray="2.500 .8" /></Svg>
            <Caret $ml={9} $s={4} />
          </SearchRow>
          <TablesHead>表</TablesHead>
          <FieldGroup>
            <Field><FieldIcon $dim>{icons.hash}</FieldIcon>Id</Field>
            <Field><FieldIcon $dim>Abc</FieldIcon>Name</Field>
            <Field><FieldIcon $dim>Abc</FieldIcon>Region</Field>
            <Field $it $ls={0.2}><FieldIcon $dim>Abc</FieldIcon>度量名称</Field>
          </FieldGroup>
          <FieldGroup $last>
            <Field><FieldIcon>{icons.hash}</FieldIcon>Elev</Field>
            <Field><FieldIcon>{icons.globe}</FieldIcon>Lat</Field>
            <Field><FieldIcon>{icons.globe}</FieldIcon>Long</Field>
            <Field><FieldIcon>{icons.eqHash}</FieldIcon>mountains</Field>
            <Field><FieldIcon>{icons.hash}</FieldIcon>No.</Field>
            <Field $it $ls={0.45}><FieldIcon>{icons.hash}</FieldIcon>jp_mountains.csv (计数)</Field>
            <Field $it $ls={0.2}><FieldIcon>{icons.hash}</FieldIcon>度量值</Field>
          </FieldGroup>
        </DataPane>

        <Cards>
          <Card $h={86}><CardTitle>页面</CardTitle></Card>
          <Card $h={111}>
            <CardTitle>筛选器</CardTitle>
            <PillRow $mt={10} $pl={6} $gap={10}>{icons.linked}<Pill $w={187} $blue $ls={0.4}>Region: Hokkaido</Pill></PillRow>
          </Card>
          <Card $h={394}>
            <CardTitle>标记</CardTitle>
            <MarkSelect>{icons.shapes}形状<MarkSelectArrow><Caret $s={4} /></MarkSelectArrow></MarkSelect>
            <MarkGrid>
              <MarkButton><MarkIcon kind="color" />颜色</MarkButton>
              <MarkButton><MarkIcon kind="size" />大小</MarkButton>
              <MarkButton><MarkIcon kind="label" />标签</MarkButton>
              <MarkButton><MarkIcon kind="detail" />详细信息</MarkButton>
              <MarkButton><MarkIcon kind="tooltip" />工具提示</MarkButton>
              <MarkButton><MarkIcon kind="shape" />形状</MarkButton>
            </MarkGrid>
            <PillRow $pl={13} $gap={8}>{icons.size}<Pill $w={169} $ls={0.15}>总和(Elev)</Pill></PillRow>
            <PillRow $pl={13} $gap={8}>{icons.bubble}<Pill $w={169} $ls={0.15}>属性(Elev)</Pill></PillRow>
            <PillRow $pl={13} $gap={8}>{icons.bubble}<Pill $w={169} $blue $ls={0.3}>属性(Name)</Pill></PillRow>
          </Card>
        </Cards>

        <View>
          <Shelf>
            <ShelfLabel>
              <Svg w={14} h={14} sw={2}><path d="M2.500 1v2M7 1v2M11.500 1v2M2.500 4.500V13M7 4.500V13M11.500 4.500V13" /></Svg>列
            </ShelfLabel>
            <Pill $w={215} $ls={0.3}>Long</Pill>
          </Shelf>
          <Shelf>
            <ShelfLabel>
              <Svg w={14} h={14} sw={1.8}><path d="M1 3h2M1 7h2M1 11h2M4.500 3H13M4.500 7H13M4.500 11H13" /></Svg>行
            </ShelfLabel>
            <Pill $w={215}>Lat</Pill>
          </Shelf>
          <Sheet>
            <SheetTitle>Q3_1</SheetTitle>
            <MapFrame>
              <HokkaidoMap />
              <PlaceLabel>Hokkaido</PlaceLabel>
              <Attribution>© 2024 Mapbox © OpenStreetMap</Attribution>
            </MapFrame>
          </Sheet>
        </View>
      </Body>

      <SheetTabs>
        <SheetTab $w={196} $pl={12}><Svg w={10} h={13} sw={1.2}><path d="M1.500 3c0-2.500 7-2.500 7 0v7c0 2.500-7 2.500-7 0zM1.500 4c0 1.800 7 1.800 7 0" /></Svg>数据源</SheetTab>
        <SheetTab $w={90} $pl={9}>工作表 1</SheetTab>
        <SheetTab $w={63} $pl={8} $active>Q3_1</SheetTab>
        <SheetTab $w={90} $pl={9}>Q3_text</SheetTab>
        <SheetTab $w={63} $pl={9}><GridMark />Q3</SheetTab>
        <SheetTab $w={108} $pl={10}><GridMark />仪表板 2</SheetTab>
        <SheetTab $w={33} $pl={9}><Svg s={17} sw={1.2}><path d="M9 12.500H1.500v-11h11V8M4.500 9.500v-2M7 9.500v-4M9.500 9.500v-3" /><path d="M8.500 13h8M12.500 9v8" strokeWidth="1.600" /></Svg></SheetTab>
        <SheetTab $w={32} $pl={9}><Svg s={17} sw={1.2}><path d="M9 12.500H1.500v-11h11V8M1.500 7h11M7 1.500v11" /><path d="M8.500 13h8M12.500 9v8" strokeWidth="1.600" /></Svg></SheetTab>
        <SheetTab $w={32} $pl={8}><Svg s={17} sw={1.2}><path d="M8 12l-1.500-1-5 1.500V2.500L4 1.500l3 1.500 4.500-1.500V8M6.500 3v8" /><path d="M8.500 13h8M12.500 9v8" strokeWidth="1.600" /></Svg></SheetTab>
      </SheetTabs>
      <StatusBar>
        <Status $w={95}>9 个标记</Status>
        <Status $w={120}>1 行 &nbsp;x&nbsp; 1 列</Status>
        <Status $w={1457}>总和(Elev): 16,885</Status>
        <StatusCell $w={189} /><StatusCell $w={39} /><StatusCell $w={39} /><StatusCell $w={69} />
        <StatusCell $w={73}>
          {["M1 1v8M8 1L3.500 5 8 9z", "M7 1L2.500 5 7 9z", "M3 1l4.500 4L3 9z", "M9 1v8M2 1l4.500 4L2 9z"].map((d) => (
            <svg key={d} width="10" height="10" viewBox="0 0 10 10" fill="#b4b4b4" stroke="#b4b4b4" strokeWidth="1"><path d={d} strokeLinejoin="round" /></svg>
          ))}
        </StatusCell>
        <ViewModes $w={75}>
          <svg width="12" height="12" fill="#b5b5b5"><path d="M0 0h3.300v3.300H0zM4.300 0h3.300v3.300H4.300zM8.600 0h3.300v3.300H8.600zM0 4.300h3.300v3.300H0zM4.300 4.300h3.300v3.300H4.300zM8.600 4.300h3.300v3.300H8.600zM0 8.600h3.300v3.300H0zM4.300 8.600h3.300v3.300H4.300zM8.600 8.600h3.300v3.300H8.600z" /></svg>
          <svg width="12" height="12" fill="#b5b5b5"><path d="M0 0h12v7.500H0zM0 8.700h3.300V12H0zM4.300 8.700h3.300V12H4.300zM8.600 8.700h3.300V12H8.600z" /></svg>
          <svg width="12" height="12" fill="#666"><path d="M0 0h12v12H0z" /></svg>
        </ViewModes>
      </StatusBar>
      <DesktopEdge />

      <Dialog>
        <DialogTitle>
          编辑工具提示
          <Svg s={18} sw={1.4}><path d="M2 2l14 14M16 2L2 16" stroke="#111" /></Svg>
        </DialogTitle>
        <FormatRow>
          <Combo $w={145} $h={21} $fs={18} $ml={1} $mr={8}>Tableau Book<Chevron /></Combo>
          <Combo $w={61} $h={21} $mr={4}>12<Chevron /></Combo>
          <FormatButton><Glyph>B</Glyph></FormatButton>
          <FormatButton><Glyph $italic>I</Glyph></FormatButton>
          <FormatButton><Glyph $under>U</Glyph></FormatButton>
          <FormatButton $w={43} $ml={6}><Swatch /><Caret $s={4} $black /></FormatButton>
          <FormatButton $w={27} $ml={6} $on><AlignIcon a="l" /></FormatButton>
          <FormatButton $w={27} $ml={0} $mid><AlignIcon a="c" /></FormatButton>
          <FormatButton $w={27} $ml={0} $end><AlignIcon a="r" /></FormatButton>
          <FormatButton $w={60} $ml={12}>插入<Caret $s={4} $black /></FormatButton>
          <FormatButton><Svg s={14} sw={2}><path d="M1.500 1l11 11M12.500 1l-11 11" stroke="#c4532f" /></Svg></FormatButton>
        </FormatRow>
        <RulerRow><Ruler /></RulerRow>
        <Editor>
          <EditorLine><Cursor /><Faint $w={51}>Name:</Faint><Token $w={109} $dark>&lt;<b>属性</b>(Name)&gt;</Token></EditorLine>
          <EditorLine><Faint $w={48}>Elev:</Faint><Token $w={96}>&lt;<b>属性</b>(Elev)&gt;</Token>m</EditorLine>
        </Editor>
        <Options>
          <OptionRow $h={26}><Check /><OptionLabel $w={132}>显示工具提示<Key k="S" /></OptionLabel><Combo $w={242} $h={25}>响应式 - 即时显示工具提示<Chevron /></Combo></OptionRow>
          <OptionRow $h={34}><Check /><OptionLabel>包括命令按钮<Key k="I" /></OptionLabel></OptionRow>
          <OptionRow $h={28}><Check /><OptionLabel>允许根据类别进行选择<Key k="A" /></OptionLabel></OptionRow>
        </Options>
        <ButtonRow>
          <DialogButton $ml={1}>重置<Key k="R" /></DialogButton>
          <DialogButton $ml={4}>预览<Key k="P" /></DialogButton>
          <DialogButton $ml={165} $primary>确定</DialogButton>
          <DialogButton $ml={11}>取消</DialogButton>
        </ButtonRow>
        <Grip>
          <svg width="12" height="12" fill="#b5b5b5"><path d="M8 0h3v3H8zM4 4h3v3H4zM8 4h3v3H8zM0 8h3v3H0zM4 8h3v3H4zM8 8h3v3H8z" /></svg>
        </Grip>
      </Dialog>
    </Window>
  );
}
